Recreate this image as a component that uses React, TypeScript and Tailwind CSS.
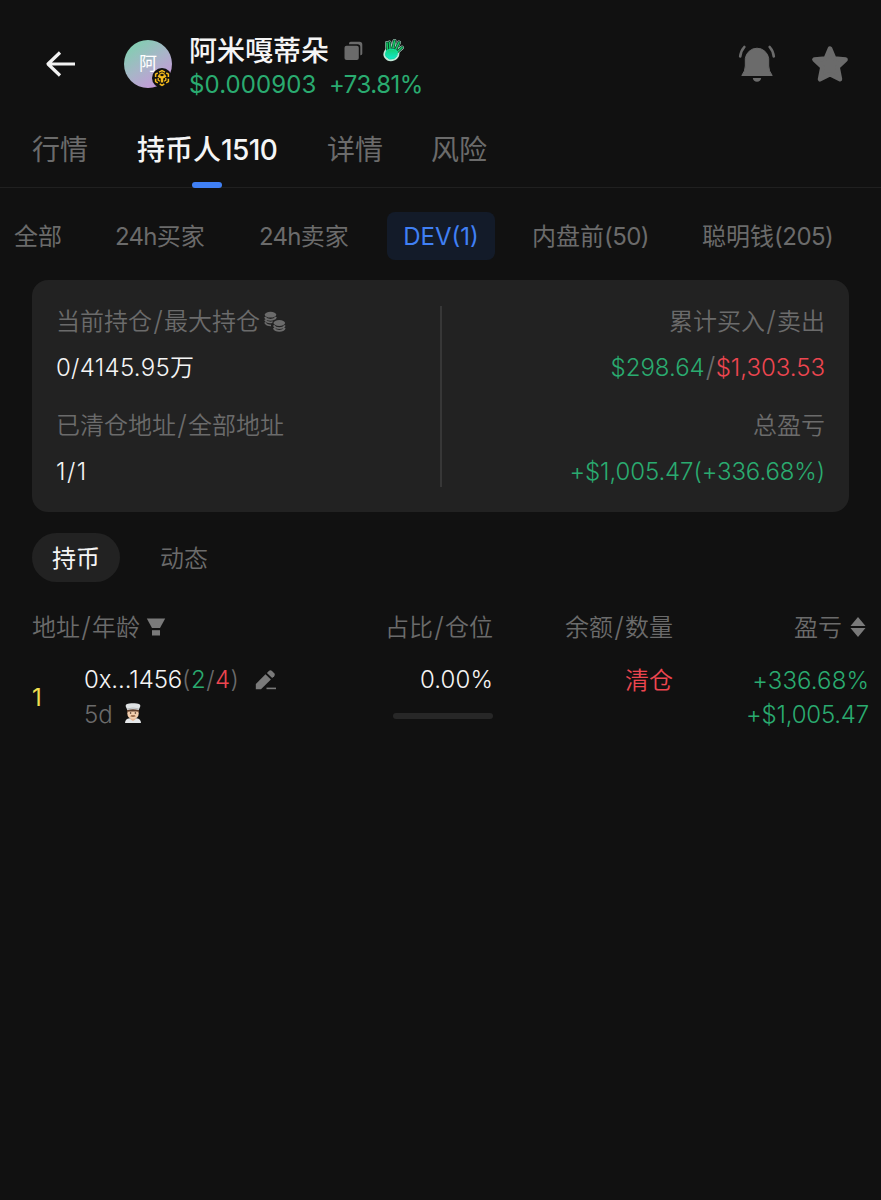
import type { ReactNode } from "react";

const FONT = "font-[Inter,'Noto_Sans_CJK_SC',sans-serif]";

function BackArrow() {
  return (
    <svg className="h-[28px] w-[32px] shrink-0" viewBox="0 0 32 28" fill="none" stroke="#f2f2f2" strokeWidth="3.2">
      <path d="M30 14H3M15 2.500L3 14L15 25.500" strokeLinejoin="round" />
    </svg>
  );
}

function ChainBadge() {
  return (
    <svg className="absolute top-[28px] left-[28px] h-5 w-5" viewBox="0 0 20 20">
      <circle cx="10" cy="10" r="10" fill="#111" />
      <g fill="none" stroke="#f5bb1c" strokeWidth="1.500">
        <path d="M7 4.200L10 2.600L13 4.200M14.300 5L16.400 6.200V8.900M16.400 10.800V13.600L14.200 14.900M12.300 16L10 17.300L7.700 16M5.800 14.900L3.600 13.600V10.800M3.600 8.900V6.200L5.700 5" />
        <path d="M6.200 7.600L10 9.800L13.800 7.600M10 9.800V14.500" strokeWidth="2.400" />
        <path d="M7.200 6.500L10 5L12.800 6.500M6.200 10V12.200L8 13.300M13.800 10V12.200L12 13.300" strokeWidth="1.300" />
      </g>
    </svg>
  );
}

function CopyIcon() {
  return (
    <svg className="h-5 w-5 shrink-0" viewBox="0 0 20 20" fill="#6b6b6b">
      <path d="M5 3.300V2.500Q5 .8 6.700 .8H15.500Q18.300 .8 18.300 3.600V12.500Q18.300 14.300 16.600 14.300H16.300V6Q16.300 3.300 13.600 3.300Z" />
      <rect x=".5" y="4.700" width="14.300" height="14.300" rx="2" />
    </svg>
  );
}

function HandIcon() {
  return (
    <svg className="h-6 w-6 shrink-0" viewBox="0 0 24 24" fill="none" strokeLinecap="round" strokeLinejoin="round">
      <defs>
        <linearGradient id="hand" x1="0" y1="0" x2="0" y2="1">
          <stop offset="0" stopColor="#16d070" />
          <stop offset="1" stopColor="#12e8d0" />
        </linearGradient>
      </defs>
      <g stroke="#c3e8d8" strokeWidth="4">
        <path d="M5.500 12L5 5M8 11L7.500 4.500M11 10L12.500 3M13.500 12L17 4.500M15 14L20 9.500" />
        <path d="M4.500 13Q9 9 15 13Q16.500 18 12 20.500Q7 22.500 4 18.500Q2.500 16 4.500 13Z" />
      </g>
      <g stroke="#073d2c" strokeWidth="3">
        <path d="M5.500 12L5 5M8 11L7.500 4.500M11 10L12.500 3M13.500 12L17 4.500M15 14L20 9.500" />
      </g>
      <g stroke="#18c965" strokeWidth="1.600">
        <path d="M5.500 12L5 5M8 11L7.500 4.500M11 10L12.500 3M13.500 12L17 4.500M15 14L20 9.500" />
      </g>
      <path d="M4.500 13Q9 9 15 13Q16.500 18 12 20.500Q7 22.500 4 18.500Q2.500 16 4.500 13Z" fill="url(#hand)" stroke="#12dfa7" strokeWidth="1" />
    </svg>
  );
}

function BellIcon() {
  return (
    <svg className="h-[38px] w-[38px] shrink-0" viewBox="0 0 38 38" fill="#6b6b6b">
      <path d="M7.300 13.500A11.800 11.800 0 0 1 30.700 13.500V21Q30.700 26 34.200 30.500H3.800Q7.300 26 7.300 21Z" stroke="#6b6b6b" strokeWidth="1" strokeLinejoin="round" />
      <path d="M14.800 33H23.200Q22.500 36.800 19 36.800T14.800 33Z" />
      <path d="M6.300 2Q2.800 6 2.200 11.500M31.700 2Q35.200 6 35.800 11.500" fill="none" stroke="#6b6b6b" strokeWidth="2.600" strokeLinecap="round" />
    </svg>
  );
}

function StarIcon() {
  return (
    <svg className="h-[38px] w-[38px] shrink-0" viewBox="0 0 38 38">
      <path d="M19 3.500L23.300 13.600L34.600 14.600L26.600 22L29 34.300L19 29.200L9 34.300L11.400 22L3.400 14.600L14.700 13.600Z" fill="#6b6b6b" stroke="#6b6b6b" strokeWidth="4.500" strokeLinejoin="round" />
    </svg>
  );
}

function CoinStack({ x, y }: { x: number; y: number }) {
  return (
    <g transform={`translate(${x} ${y})`}>
      <ellipse cx="6" cy="3.200" rx="5.800" ry="2.900" fill="#6b6b6b" />
      <path d="M.4 5.500Q1.800 8.300 6 8.300T11.600 5.500M.4 8.200Q1.800 11 6 11T11.600 8.200" fill="none" stroke="#6b6b6b" strokeWidth="1.700" />
    </g>
  );
}

function CoinsIcon() {
  return (
    <svg className="h-[22px] w-[22px]" viewBox="0 0 22 22">
      <CoinStack x={0.5} y={0.5} />
      <path d="M.9 11.400Q2.500 14.500 7 14.500" fill="none" stroke="#6b6b6b" strokeWidth="1.700" />
      <path d="M8.300 12Q8.300 8 14.500 8T21 12V20H8.300Z" fill="#222" />
      <CoinStack x={9.3} y={8.800} />
    </svg>
  );
}

function FilterIcon() {
  return (
    <svg className="h-5 w-5" viewBox="0 0 20 20" fill="#7a7a7a">
      <path d="M.8 1.500H19.200L14 11H6Z" />
      <rect x="6" y="13.200" width="8" height="5.300" />
    </svg>
  );
}

function SortIcon() {
  return (
    <svg className="h-5 w-4" viewBox="0 0 16 20" fill="#7a7a7a">
      <path d="M8 0L15.500 9H.5ZM8 20L15.500 11H.5Z" />
    </svg>
  );
}

function PencilIcon() {
  return (
    <svg className="h-[22px] w-[22px]" viewBox="0 0 22 22" fill="#7a7a7a">
      <path d="M.8 15L10.500 5.300L15.900 10.500L6 20.200H.8Z" />
      <path d="M11.900 3.900L13.800 2Q15.400 .5 17 2L19.200 4.200Q20.600 5.700 19.200 7.200L17.200 9.100Z" />
      <rect x="11.500" y="18.600" width="9.500" height="1.600" />
    </svg>
  );
}

function ChefIcon() {
  return (
    <svg className="h-5 w-4" viewBox="0 0 16 20">
      <path d="M0 20Q0 16 4.500 15.300H11.500Q16 16 16 20Z" fill="#e6e8ea" />
      <path d="M5.500 14H10.500V16.500L8 18L5.500 16.500Z" fill="#e8b894" />
      <path d="M2.300 7.500H13.700V10.500Q13.500 15.800 8 15.800T2.300 10.500Z" fill="#f4cfae" />
      <path d="M2.200 6H13.800V10L12.500 8.500H3.500L2.200 10Z" fill="#60402d" />
      <path d="M2.300 7L1.200 4.500Q-.2 2 2 1Q5 -.2 8 .3Q11 -.2 14 1Q16.200 2 14.800 4.500L13.700 7Q8 5.500 2.300 7Z" fill="#dfe2e4" />
      <path d="M2.300 5.800Q8 4.300 13.700 5.800" stroke="#a5a9ac" strokeWidth=".7" fill="none" />
      <circle cx="5.600" cy="10" r=".8" fill="#3a261c" />
      <circle cx="10.400" cy="10" r=".8" fill="#3a261c" />
      <path d="M5.200 13.300Q6.500 11.700 8 12.400Q9.500 11.700 10.800 13.300Q8 14 5.200 13.300Z" fill="#774727" />
    </svg>
  );
}

function Slash() {
  return <span className="inline-block w-3 scale-115 text-center">/</span>;
}

function Tab({ children, className }: { children: ReactNode; className: string }) {
  return <div className={`shrink-0 whitespace-nowrap text-[#6b6b6b] ${className}`}>{children}</div>;
}

export default function App() {
  return (
    <div className={`flex h-[1200px] w-[881px] flex-col overflow-hidden bg-[#111] text-2xl whitespace-nowrap ${FONT}`}>
      <header className="flex h-[110px] items-center pt-[18px] pr-[32px] pl-[45px]">
        <BackArrow />
        <div className="relative ml-[47px] flex size-12 shrink-0 items-center justify-center rounded-full bg-linear-[145deg] from-[#76d6aa] via-[#a8b5c8] to-[#d18ee0] text-lg text-white">
          阿
          <ChainBadge />
        </div>
        <div className="ml-[17px] flex w-[240px] shrink-0 flex-col pt-[8px]">
          <div className="flex h-[33px] items-center">
            <span className="w-[155px] pt-px text-[28px] font-medium text-[#f5f5f5]">阿米嘎蒂朵</span>
            <span className="-mt-0.5"><CopyIcon /></span>
            <span className="-mt-1 ml-[18px]"><HandIcon /></span>
          </div>
          <div className="flex h-[33px] items-center text-[#2aab70]">
            <span className="w-[140px] tracking-[0.1px]">$0.000903</span>
            <span className="tracking-[-0.5px]">+73.81%</span>
          </div>
        </div>
        <div className="ml-auto flex gap-[35px]">
          <BellIcon />
          <StarIcon />
        </div>
      </header>

      <nav className="flex h-[78px] shrink-0 border-b border-[#202020] pl-[32px] text-[28px] leading-[80px]">
        <Tab className="w-[105px]">行情</Tab>
        <div className="relative w-[190px] font-medium text-[#f5f5f5]">
          持币人<span className="tracking-[-0.6px]">1510</span>
          <span className="absolute bottom-[-1px] left-[55px] h-1.5 w-[30px] rounded-full bg-[#4080f5]" />
        </div>
        <Tab className="w-[104px]">详情</Tab>
        <Tab className="">风险</Tab>
      </nav>

      <div className="mt-[24px] flex h-12 shrink-0 items-center pl-[14px] leading-[48px]">
        <Tab className="w-[101px] pt-px">全部</Tab>
        <Tab className="w-[144px] pt-px"><span className="tracking-[-0.7px]">24h</span>买家</Tab>
        <Tab className="w-[128px] pt-px"><span className="tracking-[-0.7px]">24h</span>卖家</Tab>
        <div className="flex h-12 w-[108px] shrink-0 items-center justify-center rounded-lg bg-[#131b29] pt-px text-[#4080f5]">DEV(1)</div>
        <Tab className="ml-[37px] w-[170px] pt-px">内盘前<span className="tracking-[-0.6px]">(50)</span></Tab>
        <Tab className="pt-px">聪明钱<span className="tracking-[-0.5px]">(205)</span></Tab>
      </div>

      <section className="mt-5 ml-8 flex h-[232px] w-[817px] shrink-0 justify-between rounded-2xl bg-[#222] px-6 pt-[19px] font-[350] text-[#6b6b6b]">
        <div className="flex w-[384px] flex-col">
          <div className="flex h-[46px] items-center">当前持仓<Slash />最大持仓<span className="ml-[4px]"><CoinsIcon /></span></div>
          <div className="h-[46px] leading-[46px] text-[#f5f5f5]"><span className="tracking-[0.3px]">0/4145.95</span>万</div>
          <div className="mt-3 h-[46px] leading-[46px]">已清仓地址<Slash />全部地址</div>
          <div className="h-[46px] leading-[46px] tracking-[1.5px] text-[#f5f5f5]">1/1</div>
        </div>
        <div className="mt-[7px] h-[181px] w-0.5 bg-[#373737]" />
        <div className="flex w-[383px] flex-col items-end">
          <div className="h-[46px] leading-[46px]">累计买入<Slash />卖出</div>
          <div className="flex h-[46px] leading-[46px]"><span className="text-[#2aab70]">$298.64</span><span className="w-[11px] scale-115 text-center">/</span><span className="text-[#ed4650]">$1,303.53</span></div>
          <div className="mt-3 h-[46px] leading-[46px]">总盈亏</div>
          <div className="h-[46px] leading-[46px] tracking-[-0.1px] text-[#2aab70]">+$1,005.47(+336.68%)</div>
        </div>
      </section>

      <div className="mt-[21px] flex h-[49px] shrink-0 items-center pl-8">
        <div className="flex h-[49px] w-[88px] items-center justify-center rounded-full bg-[#222] pt-0.5 text-[#f5f5f5]">持币</div>
        <div className="ml-10 pt-0.5 font-[350] text-[#6b6b6b]">动态</div>
      </div>

      <div className="mt-[28px] flex h-9 shrink-0 items-center pl-8 font-[350] text-[#6b6b6b]">
        <div className="flex w-[261px] items-center">地址<Slash />年龄<span className="-mt-0.5 ml-[6px]"><FilterIcon /></span></div>
        <div className="w-[200px] text-right">占比<Slash />仓位</div>
        <div className="w-[180px] text-right">余额<Slash />数量</div>
        <div className="flex w-[193px] items-center justify-end">盈亏<span className="-mt-0.5 ml-[8px]"><SortIcon /></span></div>
      </div>

      <div className="mt-[16px] flex h-[70px] shrink-0 pl-8 font-[350]">
        <div className="w-[52px] leading-[72px] font-normal text-[#efdf50]">1</div>
        <div className="w-[209px] text-[#6b6b6b]">
          <div className="flex h-[35px] items-center">
            <span className="w-[98px] tracking-[-0.1px] text-[#f5f5f5]">0x...1456</span>
            <span className="flex w-[57px] justify-between">(<span className="text-[#2aab70]">2</span>/<span className="text-[#ed4650]">4</span>)</span>
            <span className="ml-[16px]"><PencilIcon /></span>
          </div>
          <div className="flex h-[35px] items-center">5d<span className="-mt-1 ml-3"><ChefIcon /></span></div>
        </div>
        <div className="flex w-[200px] flex-col items-end">
          <div className="h-[35px] leading-[36px] tracking-[0.1px] text-[#f5f5f5]">0.00%</div>
          <div className="mt-[16px] h-1.5 w-[100px] rounded-full bg-[#272727]" />
        </div>
        <div className="w-[180px] text-right leading-[37px] text-[#ed4650]">清仓</div>
        <div className="w-[196px] text-right leading-[35px] text-[#2aab70]">
          <div className="pt-px tracking-[0.1px]">+336.68%</div>
          <div className="-mt-px tracking-[-0.2px]">+$1,005.47</div>
        </div>
      </div>
    </div>
  );
}
